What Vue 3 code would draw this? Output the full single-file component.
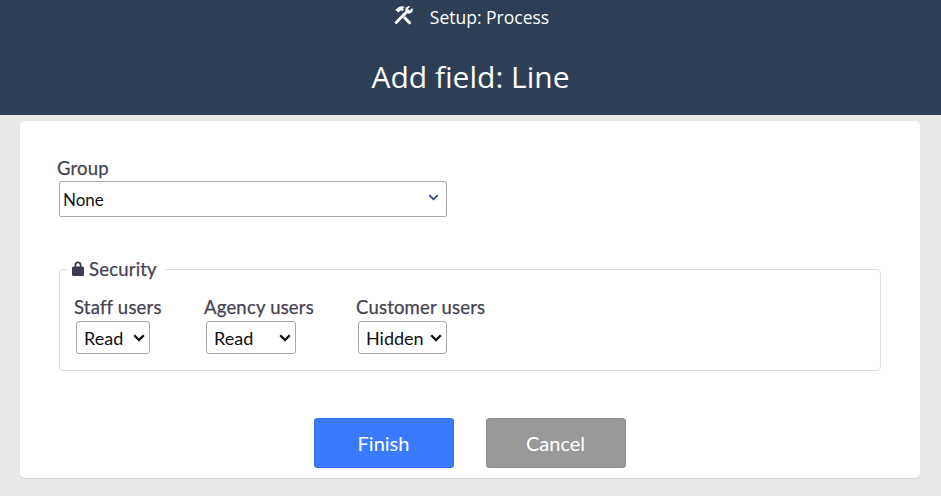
<script setup>
const roles = [
  { label: 'Staff users', value: 'Read', cls: 'staff', options: ['Read', 'Edit', 'Hidden'] },
  { label: 'Agency users', value: 'Read', cls: 'agency', options: ['Read', 'Edit', 'Hidden'] },
  { label: 'Customer users', value: 'Hidden', cls: 'customer', options: ['Read', 'Edit', 'Hidden'] }
]
</script>

<template>
  <div class="page">
    <header class="head">
      <div class="crumb">
        <svg class="tools" viewBox="0 0 24 24" width="22" height="22" aria-hidden="true">
          <path fill="#fff" d="M3.200 19.400 13.300 8.900l2.200 2.200L5.400 21.600a1 1 0 0 1-1.400 0l-.8-.8a1 1 0 0 1 0-1.400Z"/>
          <path fill="#fff" d="M3.600 6.600 7.400 3.300c2.600-1.300 5-.9 6.800.4l-2.300.5 1 2-1.600 1.600-1.900-.9-2.200 2.300L3.600 6.600Z"/>
          <path fill="#fff" d="M14.200 13.200l6.300 6.400a1.400 1.400 0 0 1 0 2l-.4.3a1.400 1.400 0 0 1-2 0l-6.100-6.500 2.200-2.200Z"/>
          <path fill="#fff" d="M22.400 4.600c.7 2.200-.1 4.500-2.100 5.500-1.200.6-2.500.5-3.500.1l-2.300 2.300-2.100-2.100 2.300-2.400c-.4-1.200-.3-2.500.4-3.600 1-1.700 3.100-2.400 5-1.900l-2.800 2.800 1.900 1.900 2.700-2.600Z"/>
        </svg>
        <span>Setup: Process</span>
      </div>
      <h1 class="title">Add field: Line</h1>
    </header>

    <main class="card">
      <div class="group">
        <label class="label group-label" for="group">Group</label>
        <div class="group-select">
          <select id="group" class="big-select">
            <option>None</option>
          </select>
          <svg class="chevron" viewBox="0 0 12 8" width="11" height="7" aria-hidden="true">
            <path d="M1.200 1.300 6 6l4.800-4.700" fill="none" stroke="#2f3a8f" stroke-width="1.900"/>
          </svg>
        </div>
      </div>

      <fieldset class="security">
        <legend class="legend">
          <svg class="lock" viewBox="0 0 12 15" width="12" height="15" aria-hidden="true">
            <path fill="#3c3b50" fill-rule="evenodd" d="M2.500 5.500V4a3.500 3.500 0 0 1 7 0v1.500h1A1.500 1.500 0 0 1 12 7v6.500A1.500 1.500 0 0 1 10.500 15h-9A1.500 1.500 0 0 1 0 13.500V7a1.500 1.500 0 0 1 1.500-1.500h1ZM4.300 5.500h3.400V4a1.700 1.700 0 0 0-3.400 0v1.500Z"/>
          </svg>
          <span>Security</span>
        </legend>
        <div class="roles">
          <div v-for="r in roles" :key="r.label" class="role" :class="r.cls">
            <label class="label">{{ r.label }}</label>
            <div class="small-wrap">
              <select class="small-select">
                <option v-for="o in r.options" :key="o" :selected="o === r.value">{{ o }}</option>
              </select>
              <svg class="small-chevron" viewBox="0 0 12 8" width="12" height="8" aria-hidden="true">
                <path d="M1.200 1.200 6 6l4.800-4.800" fill="none" stroke="#111" stroke-width="2.300"/>
              </svg>
            </div>
          </div>
        </div>
      </fieldset>

      <div class="actions">
        <button class="btn finish" type="button">Finish</button>
        <button class="btn cancel" type="button">Cancel</button>
      </div>
    </main>
  </div>
</template>

<style>
html, body { margin: 0; background: #e8e8e8; }
</style>

<style scoped>
.page {
  width: 941px;
  height: 496px;
  overflow: hidden;
  background: #e8e8e8;
  font-family: Lato, "Liberation Sans", sans-serif;
  color: #45434f;
}
.head {
  height: 115px;
  background: #2e3e54;
  color: #fff;
  font-family: "Open Sans", sans-serif;
  text-align: center;
  box-sizing: border-box;
  padding-top: 4px;
}
.crumb {
  display: flex;
  justify-content: center;
  align-items: center;
  gap: 16px;
  height: 26px;
  font-size: 17.500px;
}
.tools { margin-top: -4px; }
.title {
  margin: 27px 0 0;
  font-weight: 400;
  font-size: 30px;
  line-height: 40px;
}
.card {
  margin: 6px 21px 0 20px;
  height: 357px;
  box-sizing: border-box;
  background: #fff;
  border-radius: 5px;
  box-shadow: 0 1px 1px #d4d4d4;
  padding: 35px 39px 0 36px;
}
.label {
  display: block;
  padding-left: 1px;
  font-size: 18.500px;
  letter-spacing: .2px;
  -webkit-text-stroke: .25px #45434f;
  line-height: 24px;
  color: #45434f;
}
.agency .label { padding-left: 0; }
.group-label { line-height: 25px; }
.group-select {
  position: relative;
  width: 388px;
  margin-left: 3px;
}
.big-select {
  display: block;
  width: 100%;
  height: 36px;
  appearance: none;
  background: #fff;
  border: 1px solid #aaa;
  border-radius: 2px;
  padding: 0 3px;
  font-family: Lato, sans-serif;
  font-size: 17px;
  color: #111;
}
.chevron {
  position: absolute;
  right: 8px;
  top: 13px;
  pointer-events: none;
}
.security {
  margin: 41px 0 0 3px;
  padding: 0 13px;
  height: 113px;
  box-sizing: border-box;
  border: 1px solid #ddd;
  border-radius: 4px;
  min-width: 0;
}
.legend {
  margin-left: -6px;
  padding: 0 8px 0 5px;
  font-size: 18.500px;
  letter-spacing: .2px;
  -webkit-text-stroke: .25px #45434f;
  line-height: 22px;
  display: flex;
  align-items: center;
  gap: 5px;
  color: #45434f;
}
.lock { margin-top: -1px; }
.roles {
  display: flex;
  margin-top: 15px;
}
.role { display: flex; flex-direction: column; }
.staff { width: 131px; }
.agency { width: 151px; }
.small-wrap {
  position: relative;
  align-self: flex-start;
  margin: 2px 0 0 3px;
}
.agency .small-wrap { margin-left: 2px; }
.small-select {
  display: block;
  appearance: none;
  height: 33px;
  box-sizing: border-box;
  background: #fff;
  border: 1px solid #aaa;
  border-radius: 3px;
  font-family: Lato, sans-serif;
  font-size: 18px;
  color: #111;
  padding: 0 7px;
}
.small-chevron {
  position: absolute;
  right: 5px;
  top: 13px;
  pointer-events: none;
}
.staff .small-select { width: 74px; }
.agency .small-select { width: 90px; }
.customer .small-select { width: 89px; }
.actions {
  display: flex;
  justify-content: center;
  gap: 32px;
  margin: 47px 0 0 2px;
}
.btn {
  width: 140px;
  height: 50px;
  border-radius: 3px;
  font-family: Lato, sans-serif;
  font-size: 20px;
  color: #fff;
  cursor: pointer;
}
.finish { background: #3a7afe; border: 1px solid #2f6ff0; }
.cancel { background: #999; border: 1px solid #8f8f8f; }
</style>
